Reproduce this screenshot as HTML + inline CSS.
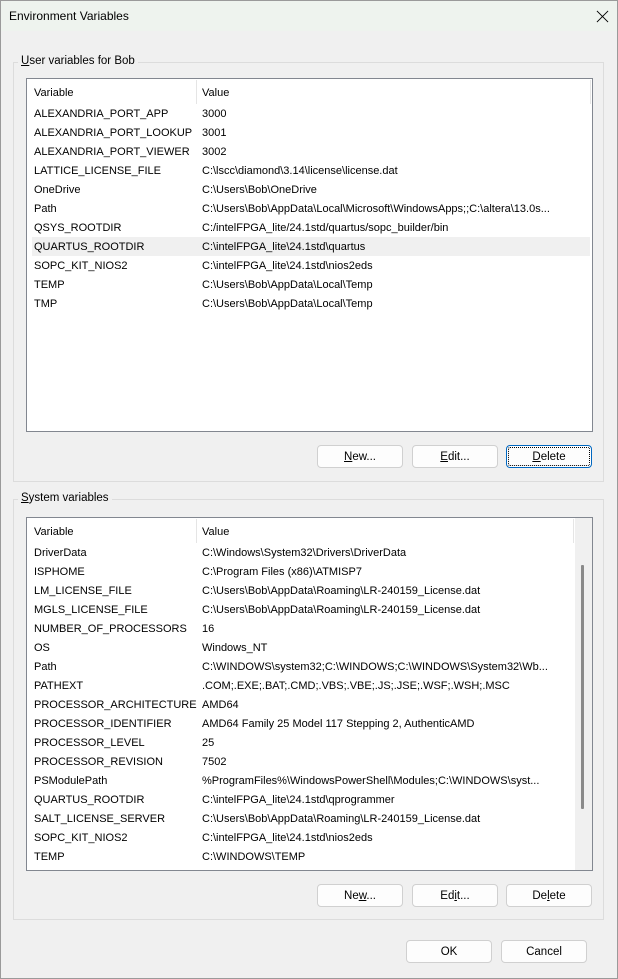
<!DOCTYPE html>
<html><head><meta charset="utf-8"><style>
*{box-sizing:border-box;margin:0;padding:0}
body{width:618px;height:979px;background:#f0f0f0;font-family:"Liberation Sans",sans-serif;font-size:11px;color:#000;position:relative;overflow:hidden}
.win{position:absolute;left:0;top:0;width:618px;height:979px;border:1px solid #9a9a9a}
.title{position:absolute;left:1px;top:1px;width:616px;height:30px;background:#eef3ee}
.title span{position:absolute;left:8px;top:8px;font-size:12px}
.close{position:absolute;left:595px;top:9px;width:13px;height:13px}
.grp{position:absolute;left:13px;width:591px;border:1px solid #dcdcdc}
.glabel{position:absolute;left:18px;background:#f0f0f0;padding:0 3px;font-size:11.5px}
.list{position:absolute;left:26px;width:567px;background:#fff;border:1px solid #828790;overflow:hidden}
.hdr{position:absolute;left:0;top:1px;height:24px;width:100%}
.hdr span{position:absolute;top:7px}
.hdr i{position:absolute;left:169px;top:0;width:1px;height:24px;background:#e5e5e5}
.row{position:absolute;left:5px;height:19px;width:558px}
.row span{position:absolute;top:4px;white-space:nowrap}
.row .v{left:170px}.row .n{left:2px}
.sel{background:#f0f0f0}
.btn{position:absolute;width:86px;height:23px;background:#fdfdfd;border:1px solid #d0d0d0;border-radius:4px;text-align:center;line-height:22px;font-size:11.5px}
.btn.f{border:1px solid #0067c0;box-shadow:inset 0 0 0 1px #fff;outline:1px dotted #000;outline-offset:-3px}
u{text-decoration:underline}
</style></head><body>
<div class="win"></div>
<div class="title"><span>Environment Variables</span>
<svg class="close" viewBox="0 0 14 14"><path d="M1 1L13 13M13 1L1 13" stroke="#000" stroke-width="1"/></svg></div>

<div class="grp" style="top:62px;height:420px"></div>
<div class="glabel" style="top:55px"><u>U</u>ser variables for Bob</div>
<div class="list" style="top:78px;height:354px">
<div class="hdr"><span style="left:7px">Variable</span><i></i><span style="left:175px">Value</span><i style="left:563px"></i></div>
<div class="row" style="top:25px"><span class="n">ALEXANDRIA_PORT_APP</span><span class="v">3000</span></div>
<div class="row" style="top:44px"><span class="n">ALEXANDRIA_PORT_LOOKUP</span><span class="v">3001</span></div>
<div class="row" style="top:63px"><span class="n">ALEXANDRIA_PORT_VIEWER</span><span class="v">3002</span></div>
<div class="row" style="top:82px"><span class="n">LATTICE_LICENSE_FILE</span><span class="v">C:\lscc\diamond\3.14\license\license.dat</span></div>
<div class="row" style="top:101px"><span class="n">OneDrive</span><span class="v">C:\Users\Bob\OneDrive</span></div>
<div class="row" style="top:120px"><span class="n">Path</span><span class="v">C:\Users\Bob\AppData\Local\Microsoft\WindowsApps;;C:\altera\13.0s...</span></div>
<div class="row" style="top:139px"><span class="n">QSYS_ROOTDIR</span><span class="v">C:/intelFPGA_lite/24.1std/quartus/sopc_builder/bin</span></div>
<div class="row sel" style="top:158px"><span class="n">QUARTUS_ROOTDIR</span><span class="v">C:\intelFPGA_lite\24.1std\quartus</span></div>
<div class="row" style="top:177px"><span class="n">SOPC_KIT_NIOS2</span><span class="v">C:\intelFPGA_lite\24.1std\nios2eds</span></div>
<div class="row" style="top:196px"><span class="n">TEMP</span><span class="v">C:\Users\Bob\AppData\Local\Temp</span></div>
<div class="row" style="top:215px"><span class="n">TMP</span><span class="v">C:\Users\Bob\AppData\Local\Temp</span></div>
</div>
<div class="btn" style="left:317px;top:445px"><u>N</u>ew...</div>
<div class="btn" style="left:412px;top:445px"><u>E</u>dit...</div>
<div class="btn f" style="left:506px;top:445px"><u>D</u>elete</div>

<div class="grp" style="top:499px;height:421px"></div>
<div class="glabel" style="top:492px"><u>S</u>ystem variables</div>
<div class="list" style="top:517px;height:354px">
<div class="hdr"><span style="left:7px">Variable</span><i></i><span style="left:175px">Value</span><i style="left:546px"></i></div>
<div style="position:absolute;left:548px;top:0;width:18px;height:354px;background:#f0f0f0"></div>
<div style="position:absolute;left:554px;top:47px;width:3px;height:244px;background:#8a8a8a;border-radius:1px"></div>
<div class="row" style="top:25px"><span class="n">DriverData</span><span class="v">C:\Windows\System32\Drivers\DriverData</span></div>
<div class="row" style="top:44px"><span class="n">ISPHOME</span><span class="v">C:\Program Files (x86)\ATMISP7</span></div>
<div class="row" style="top:63px"><span class="n">LM_LICENSE_FILE</span><span class="v">C:\Users\Bob\AppData\Roaming\LR-240159_License.dat</span></div>
<div class="row" style="top:82px"><span class="n">MGLS_LICENSE_FILE</span><span class="v">C:\Users\Bob\AppData\Roaming\LR-240159_License.dat</span></div>
<div class="row" style="top:101px"><span class="n">NUMBER_OF_PROCESSORS</span><span class="v">16</span></div>
<div class="row" style="top:120px"><span class="n">OS</span><span class="v">Windows_NT</span></div>
<div class="row" style="top:139px"><span class="n">Path</span><span class="v">C:\WINDOWS\system32;C:\WINDOWS;C:\WINDOWS\System32\Wb...</span></div>
<div class="row" style="top:158px"><span class="n">PATHEXT</span><span class="v">.COM;.EXE;.BAT;.CMD;.VBS;.VBE;.JS;.JSE;.WSF;.WSH;.MSC</span></div>
<div class="row" style="top:177px"><span class="n">PROCESSOR_ARCHITECTURE</span><span class="v">AMD64</span></div>
<div class="row" style="top:196px"><span class="n">PROCESSOR_IDENTIFIER</span><span class="v">AMD64 Family 25 Model 117 Stepping 2, AuthenticAMD</span></div>
<div class="row" style="top:215px"><span class="n">PROCESSOR_LEVEL</span><span class="v">25</span></div>
<div class="row" style="top:234px"><span class="n">PROCESSOR_REVISION</span><span class="v">7502</span></div>
<div class="row" style="top:253px"><span class="n">PSModulePath</span><span class="v">%ProgramFiles%\WindowsPowerShell\Modules;C:\WINDOWS\syst...</span></div>
<div class="row" style="top:272px"><span class="n">QUARTUS_ROOTDIR</span><span class="v">C:\intelFPGA_lite\24.1std\qprogrammer</span></div>
<div class="row" style="top:291px"><span class="n">SALT_LICENSE_SERVER</span><span class="v">C:\Users\Bob\AppData\Roaming\LR-240159_License.dat</span></div>
<div class="row" style="top:310px"><span class="n">SOPC_KIT_NIOS2</span><span class="v">C:\intelFPGA_lite\24.1std\nios2eds</span></div>
<div class="row" style="top:329px"><span class="n">TEMP</span><span class="v">C:\WINDOWS\TEMP</span></div>
</div>
<div class="btn" style="left:317px;top:884px">Ne<u>w</u>...</div>
<div class="btn" style="left:412px;top:884px">Ed<u>i</u>t...</div>
<div class="btn" style="left:506px;top:884px">De<u>l</u>ete</div>

<div class="btn" style="left:406px;top:940px">OK</div>
<div class="btn" style="left:501px;top:940px">Cancel</div>
</body></html>
